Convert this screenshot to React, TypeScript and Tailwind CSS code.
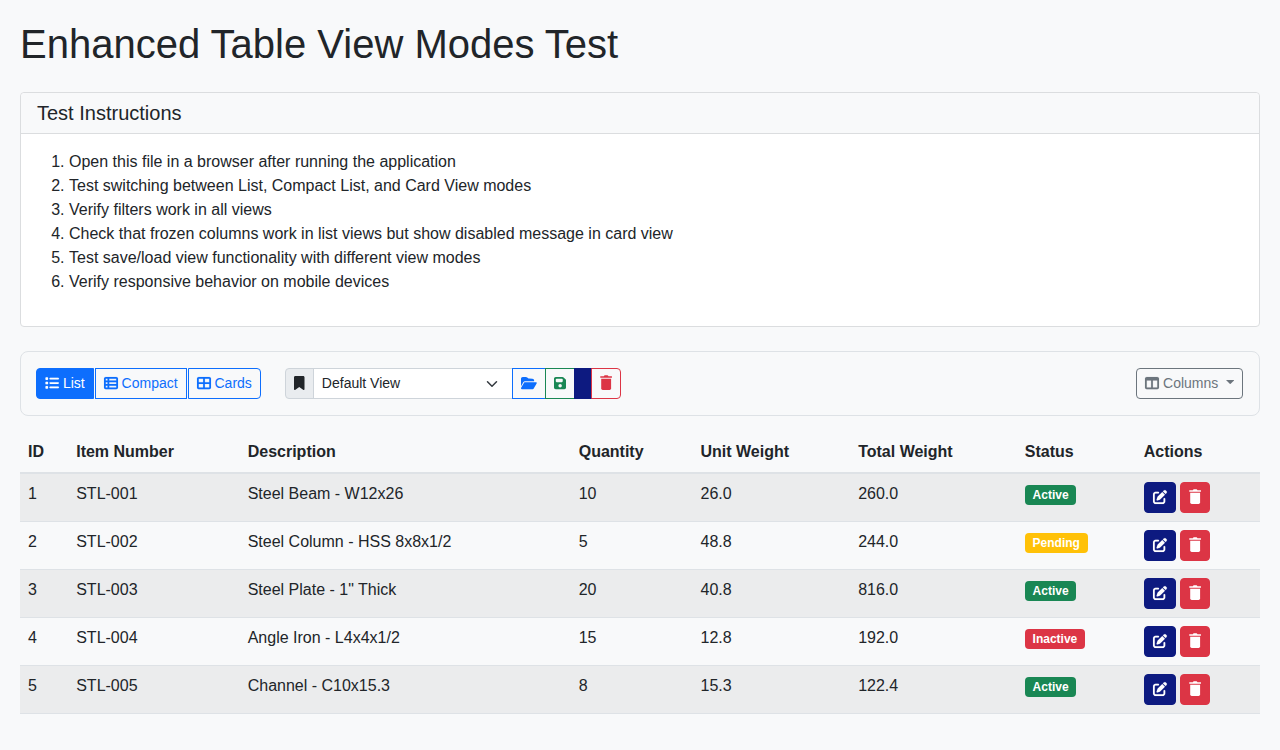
import React from 'react';
import {
  FaBookmark,
  FaFloppyDisk,
  FaFolderOpen,
  FaList,
  FaPenToSquare,
  FaTableCellsLarge,
  FaTableColumns,
  FaTableList,
} from 'react-icons/fa6';

const instructions = [
  'Open this file in a browser after running the application',
  'Test switching between List, Compact List, and Card View modes',
  'Verify filters work in all views',
  'Check that frozen columns work in list views but show disabled message in card view',
  'Test save/load view functionality with different view modes',
  'Verify responsive behavior on mobile devices',
];

type Status = 'Active' | 'Pending' | 'Inactive';

const badgeColors: Record<Status, string> = {
  Active: 'bg-[#198754]',
  Pending: 'bg-[#ffc107]',
  Inactive: 'bg-[#dc3545]',
};

const items: { id: number; num: string; desc: string; qty: number; unit: string; total: string; status: Status }[] = [
  { id: 1, num: 'STL-001', desc: 'Steel Beam - W12x26', qty: 10, unit: '26.0', total: '260.0', status: 'Active' },
  { id: 2, num: 'STL-002', desc: 'Steel Column - HSS 8x8x1/2', qty: 5, unit: '48.8', total: '244.0', status: 'Pending' },
  { id: 3, num: 'STL-003', desc: 'Steel Plate - 1" Thick', qty: 20, unit: '40.8', total: '816.0', status: 'Active' },
  { id: 4, num: 'STL-004', desc: 'Angle Iron - L4x4x1/2', qty: 15, unit: '12.8', total: '192.0', status: 'Inactive' },
  { id: 5, num: 'STL-005', desc: 'Channel - C10x15.3', qty: 8, unit: '15.3', total: '122.4', status: 'Active' },
];

const columns = [
  { label: 'ID', width: 'w-[48.2px]' },
  { label: 'Item Number', width: 'w-[171.5px]' },
  { label: 'Description', width: 'w-[331px]' },
  { label: 'Quantity', width: 'w-[121.8px]' },
  { label: 'Unit Weight', width: 'w-[157.7px]' },
  { label: 'Total Weight', width: 'w-[166.6px]' },
  { label: 'Status', width: 'w-[119px]' },
  { label: 'Actions', width: 'w-[124.2px]' },
];

const btn = 'inline-flex h-[31px] shrink-0 items-center border px-2 text-sm leading-[21px]';
const icon = 'mb-0.5 h-3.5 w-3.5 shrink-0 overflow-visible stroke-[4px]';

function TrashIcon() {
  return (
    <svg viewBox="0 0 12.25 15" className="mb-0.5 h-[15px] w-[12.25px] shrink-0" fill="currentColor">
      <path d="M4 .9Q4.200.3 4.900.3H7.400Q8.100.3 8.300.9L8.500 1.200H11.600Q12.200 1.300 12.200 2T11.600 2.800H.7Q.1 2.700.1 2T.7 1.200H3.800z" />
      <path d="M1.200 3.700H11.100V13.200Q11 15 9.600 15H2.700Q1.300 15 1.200 13.200z" />
    </svg>
  );
}

function Toolbar() {
  return (
    <div className="mb-4 flex items-center justify-between rounded-lg border border-[#dee2e6] p-4">
      <div className="flex gap-6">
        <div className="-ml-px flex gap-px">
          <button className={`${btn} gap-[3.9px] rounded-l border-[#0d6efd] bg-[#0d6efd] text-white`}>
            <FaList className={icon} />
            List
          </button>
          <button className={`${btn} gap-[3.9px] border-[#0d6efd] text-[#0d6efd]`}>
            <FaTableList className={icon} />
            Compact
          </button>
          <button className={`${btn} gap-[3.9px] rounded-r border-[#0d6efd] text-[#0d6efd]`}>
            <FaTableCellsLarge className={icon} />
            Cards
          </button>
        </div>
        <div className="flex">
          <span className={`${btn} w-[29px] justify-center rounded-l border-[#ced4da] bg-[#e9ecef]`}>
            <FaBookmark className="mb-px h-3.5 w-[10.5px] shrink-0" />
          </span>
          <button className={`${btn} -ml-px w-[200px] justify-between border-[#ced4da] bg-white`}>
            Default View
            <svg viewBox="0 0 16 16" className="mr-1.5 h-3 w-3" fill="none" stroke="#343a40" strokeWidth="2" strokeLinecap="round" strokeLinejoin="round">
              <path d="m2 5 6 6 6-6" />
            </svg>
          </button>
          <button aria-label="Load view" className={`${btn} -ml-px border-[#0d6efd] text-[#0d6efd]`}>
            <FaFolderOpen className="mb-0.5 h-3.5 w-[15.75px] shrink-0" />
          </button>
          <button aria-label="Save view" className={`${btn} -ml-px border-[#198754] text-[#198754]`}>
            <FaFloppyDisk className="mb-0.5 h-3.5 w-[12.25px] shrink-0" />
          </button>
          <button aria-label="Edit view" className={`${btn} -ml-px border-[#0d1a80] bg-[#0d1a80]`} />
          <button aria-label="Delete view" className={`${btn} -ml-px rounded-r border-[#dc3545] text-[#dc3545]`}>
            <TrashIcon />
          </button>
        </div>
      </div>
      <button className={`${btn} gap-[3.9px] rounded border-[#6c757d] text-[#6c757d]`}>
        <FaTableColumns className={icon} />
        Columns
        <svg viewBox="0 0 8 4" preserveAspectRatio="none" className="mb-[3px] ml-[3.4px] h-[4.2px] w-[8.4px]" fill="currentColor">
          <path d="M0 0h8L4 4z" />
        </svg>
      </button>
    </div>
  );
}

function ItemsTable() {
  return (
    <table className="w-full table-fixed border-separate border-spacing-0">
      <thead>
        <tr>
          {columns.map((c) => (
            <th key={c.label} className={`${c.width} border-b-2 border-[#dee2e6] p-2 text-left font-bold`}>
              {c.label}
            </th>
          ))}
        </tr>
      </thead>
      <tbody>
        {items.map((it) => (
          <tr key={it.id} className="align-top odd:bg-[#ebeced] [&>td]:border-b [&>td]:border-[#dee2e6] [&>td]:p-2">
            <td>{it.id}</td>
            <td>{it.num}</td>
            <td>{it.desc}</td>
            <td>{it.qty}</td>
            <td>{it.unit}</td>
            <td>{it.total}</td>
            <td>
              <span className={`${badgeColors[it.status]} mt-[3px] block w-fit rounded px-[7.8px] py-1 text-xs leading-3 font-bold text-white`}>
                {it.status}
              </span>
            </td>
            <td>
              <div className="flex gap-1">
                <button aria-label="Edit" className={`${btn} rounded border-[#0d1a80] bg-[#0d1a80] text-white`}>
                  <FaPenToSquare className={icon} />
                </button>
                <button aria-label="Delete" className={`${btn} rounded border-[#dc3545] bg-[#dc3545] text-white`}>
                  <TrashIcon />
                </button>
              </div>
            </td>
          </tr>
        ))}
      </tbody>
    </table>
  );
}

export default function App() {
  return (
    <div className="min-h-screen bg-[#f8f9fa] p-5 font-['Liberation_Sans',Arial,sans-serif] text-base leading-6 text-[#212529]">
      <h1 className="mb-6 text-[40px] leading-12 font-medium">Enhanced Table View Modes Test</h1>
      <section className="mb-6 rounded border border-[#dbdddf] bg-white">
        <div className="rounded-t border-b border-[#dbdddf] bg-[#f8f9fa] px-4 py-2">
          <h2 className="text-xl leading-6 font-medium">Test Instructions</h2>
        </div>
        <div className="p-4">
          <ol className="mb-4 list-decimal pl-8">
            {instructions.map((text) => (
              <li key={text}>{text}</li>
            ))}
          </ol>
        </div>
      </section>
      <Toolbar />
      <ItemsTable />
    </div>
  );
}
